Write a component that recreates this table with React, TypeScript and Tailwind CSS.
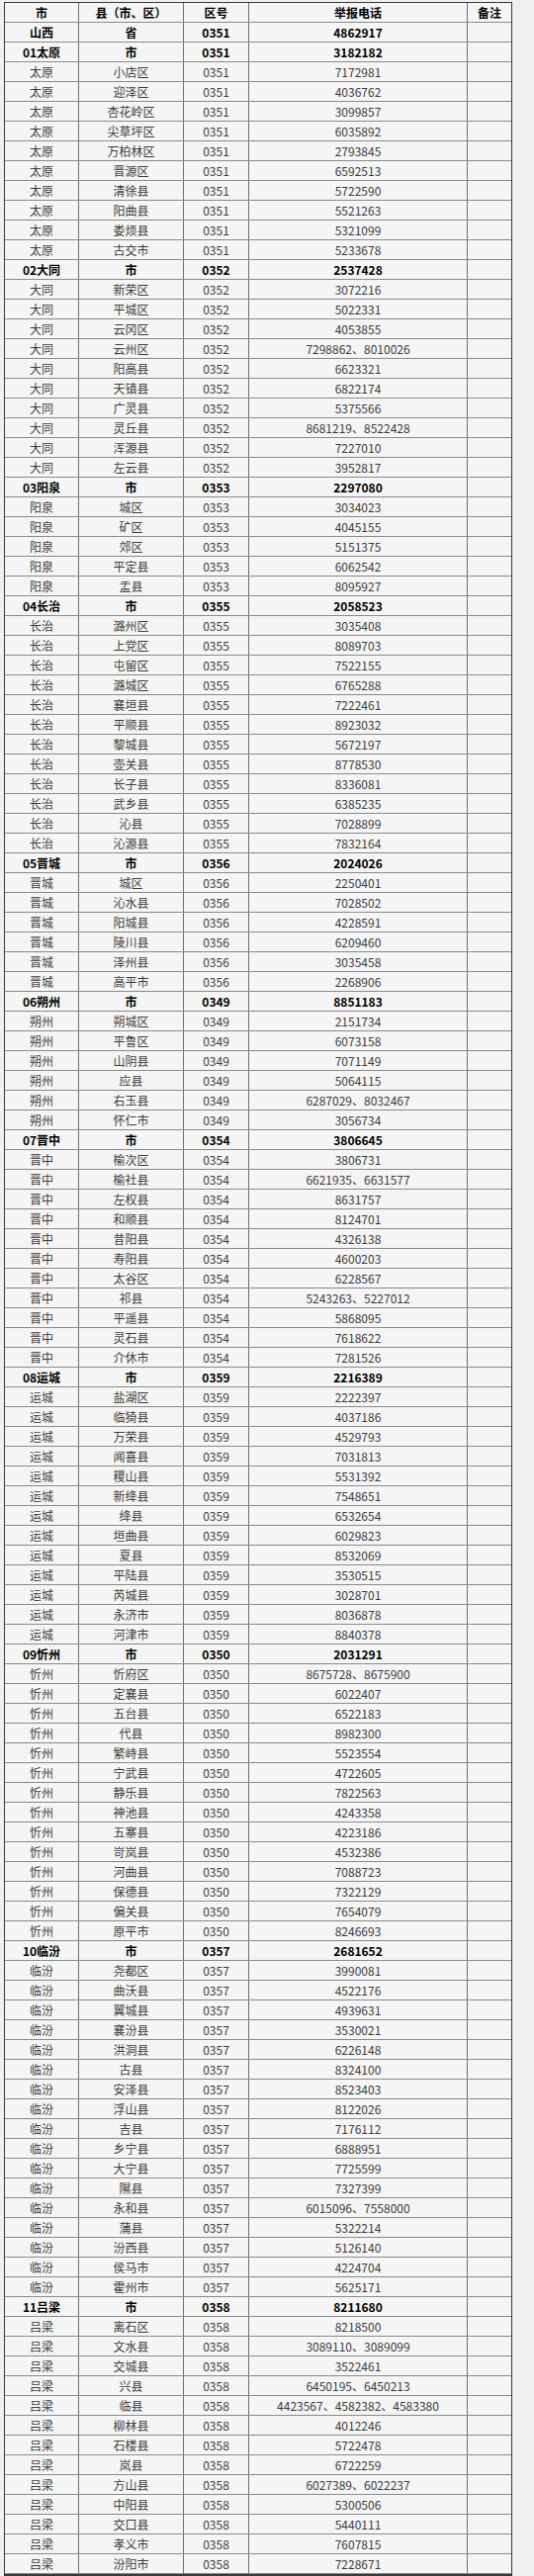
type City = {
  code: string
  name: string
  area: string
  phone: string
  items: [string, string][]
}

const CITIES: City[] = [
  {
    code: '01太原', name: '太原', area: '0351', phone: '3182182',
    items: [
      ['小店区', '7172981'], ['迎泽区', '4036762'], ['杏花岭区', '3099857'], ['尖草坪区', '6035892'],
      ['万柏林区', '2793845'], ['晋源区', '6592513'], ['清徐县', '5722590'], ['阳曲县', '5521263'],
      ['娄烦县', '5321099'], ['古交市', '5233678'],
    ],
  },
  {
    code: '02大同', name: '大同', area: '0352', phone: '2537428',
    items: [
      ['新荣区', '3072216'], ['平城区', '5022331'], ['云冈区', '4053855'], ['云州区', '7298862、8010026'],
      ['阳高县', '6623321'], ['天镇县', '6822174'], ['广灵县', '5375566'], ['灵丘县', '8681219、8522428'],
      ['浑源县', '7227010'], ['左云县', '3952817'],
    ],
  },
  {
    code: '03阳泉', name: '阳泉', area: '0353', phone: '2297080',
    items: [['城区', '3034023'], ['矿区', '4045155'], ['郊区', '5151375'], ['平定县', '6062542'], ['盂县', '8095927']],
  },
  {
    code: '04长治', name: '长治', area: '0355', phone: '2058523',
    items: [
      ['潞州区', '3035408'], ['上党区', '8089703'], ['屯留区', '7522155'], ['潞城区', '6765288'],
      ['襄垣县', '7222461'], ['平顺县', '8923032'], ['黎城县', '5672197'], ['壶关县', '8778530'],
      ['长子县', '8336081'], ['武乡县', '6385235'], ['沁县', '7028899'], ['沁源县', '7832164'],
    ],
  },
  {
    code: '05晋城', name: '晋城', area: '0356', phone: '2024026',
    items: [
      ['城区', '2250401'], ['沁水县', '7028502'], ['阳城县', '4228591'], ['陵川县', '6209460'],
      ['泽州县', '3035458'], ['高平市', '2268906'],
    ],
  },
  {
    code: '06朔州', name: '朔州', area: '0349', phone: '8851183',
    items: [
      ['朔城区', '2151734'], ['平鲁区', '6073158'], ['山阴县', '7071149'], ['应县', '5064115'],
      ['右玉县', '6287029、8032467'], ['怀仁市', '3056734'],
    ],
  },
  {
    code: '07晋中', name: '晋中', area: '0354', phone: '3806645',
    items: [
      ['榆次区', '3806731'], ['榆社县', '6621935、6631577'], ['左权县', '8631757'], ['和顺县', '8124701'],
      ['昔阳县', '4326138'], ['寿阳县', '4600203'], ['太谷区', '6228567'], ['祁县', '5243263、5227012'],
      ['平遥县', '5868095'], ['灵石县', '7618622'], ['介休市', '7281526'],
    ],
  },
  {
    code: '08运城', name: '运城', area: '0359', phone: '2216389',
    items: [
      ['盐湖区', '2222397'], ['临猗县', '4037186'], ['万荣县', '4529793'], ['闻喜县', '7031813'],
      ['稷山县', '5531392'], ['新绛县', '7548651'], ['绛县', '6532654'], ['垣曲县', '6029823'],
      ['夏县', '8532069'], ['平陆县', '3530515'], ['芮城县', '3028701'], ['永济市', '8036878'],
      ['河津市', '8840378'],
    ],
  },
  {
    code: '09忻州', name: '忻州', area: '0350', phone: '2031291',
    items: [
      ['忻府区', '8675728、8675900'], ['定襄县', '6022407'], ['五台县', '6522183'], ['代县', '8982300'],
      ['繁峙县', '5523554'], ['宁武县', '4722605'], ['静乐县', '7822563'], ['神池县', '4243358'],
      ['五寨县', '4223186'], ['岢岚县', '4532386'], ['河曲县', '7088723'], ['保德县', '7322129'],
      ['偏关县', '7654079'], ['原平市', '8246693'],
    ],
  },
  {
    code: '10临汾', name: '临汾', area: '0357', phone: '2681652',
    items: [
      ['尧都区', '3990081'], ['曲沃县', '4522176'], ['翼城县', '4939631'], ['襄汾县', '3530021'],
      ['洪洞县', '6226148'], ['古县', '8324100'], ['安泽县', '8523403'], ['浮山县', '8122026'],
      ['吉县', '7176112'], ['乡宁县', '6888951'], ['大宁县', '7725599'], ['隰县', '7327399'],
      ['永和县', '6015096、7558000'], ['蒲县', '5322214'], ['汾西县', '5126140'], ['侯马市', '4224704'],
      ['霍州市', '5625171'],
    ],
  },
  {
    code: '11吕梁', name: '吕梁', area: '0358', phone: '8211680',
    items: [
      ['离石区', '8218500'], ['文水县', '3089110、3089099'], ['交城县', '3522461'], ['兴县', '6450195、6450213'],
      ['临县', '4423567、4582382、4583380'], ['柳林县', '4012246'], ['石楼县', '5722478'], ['岚县', '6722259'],
      ['方山县', '6027389、6022237'], ['中阳县', '5300506'], ['交口县', '5440111'], ['孝义市', '7607815'],
      ['汾阳市', '7228671'],
    ],
  },
]

function Row({ cells, bold }: { cells: string[]; bold?: boolean }) {
  return (
    <div
      className={`grid h-[20px] grid-cols-[75px_106px_66px_221px_44px] border-b border-[#8a8a8a] text-[12px] leading-[19px] ${
        bold ? 'font-bold text-black' : 'text-[#3c3c3c]'
      }`}
    >
      {cells.map((c, i) => (
        <div
          key={i}
          className={`truncate text-center ${i < 4 ? 'border-r border-[#6e6e6e]' : ''}`}
        >
          {c}
        </div>
      ))}
    </div>
  )
}

export default function App() {
  return (
    <div
      className="min-h-[2605px] w-[540px] bg-[#eff1f0] pt-[2px] pl-[4px]"
      style={{ fontFamily: '"Noto Sans CJK SC", "Noto Sans", sans-serif' }}
    >
      <div className="w-[514px] border border-[#3a3a3a] border-b-2 bg-[#f4f5f4]">
        <Row cells={['市', '县（市、区）', '区号', '举报电话', '备注']} bold />
        <Row cells={['山西', '省', '0351', '4862917', '']} bold />
        {CITIES.map((city) => (
          <div key={city.code}>
            <Row cells={[city.code, '市', city.area, city.phone, '']} bold />
            {city.items.map(([county, phone]) => (
              <Row key={county} cells={[city.name, county, city.area, phone, '']} />
            ))}
          </div>
        ))}
      </div>
    </div>
  )
}
